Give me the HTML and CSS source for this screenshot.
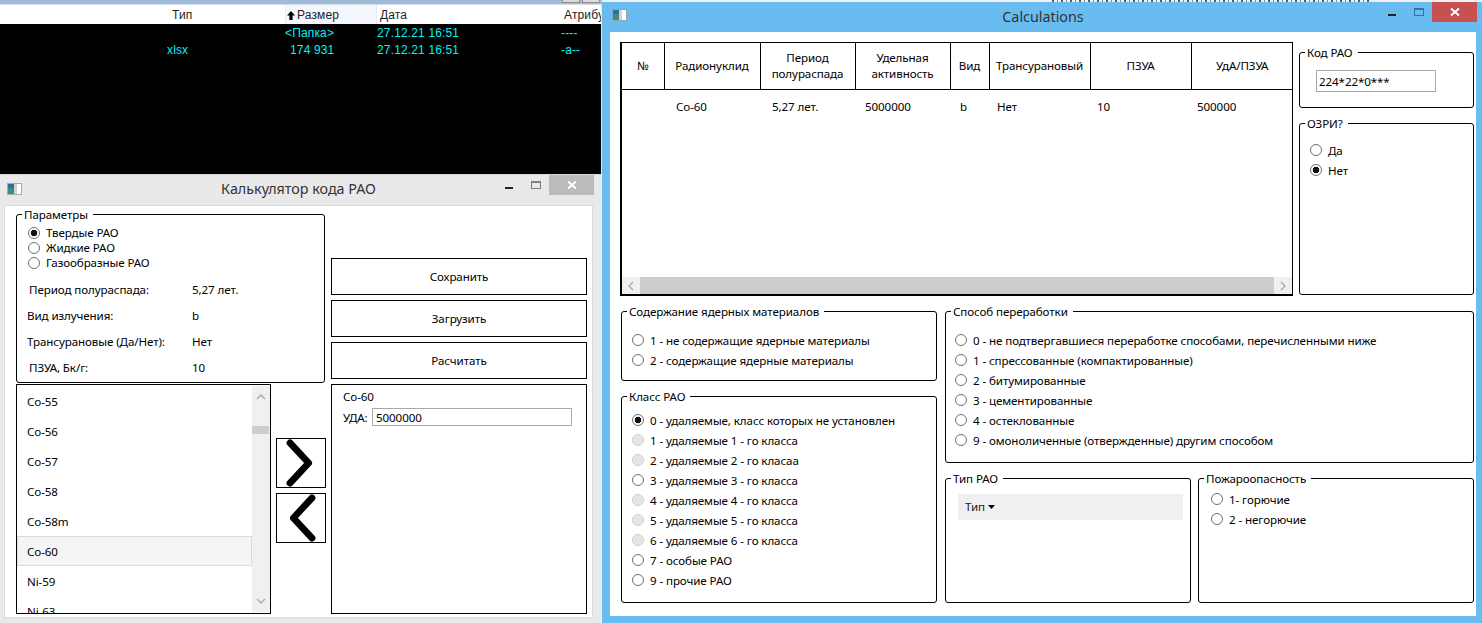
FILE: index.html
```html
<!DOCTYPE html>
<html lang="ru">
<head>
<meta charset="utf-8">
<title>Calculations</title>
<link rel="stylesheet" href="styles.css">
</head>
<body>
<div class="desktop">
  <div class="scrap"></div>

  <section class="window commander">
    <div class="cmd-top"><span class="cmd-btn"></span><span class="cmd-btn"></span></div>
    <div class="cmd-row cmd-head">
      <span></span>
      <span class="h-type">Тип</span>
      <span class="h-size"><svg class="sort" viewBox="0 0 8 9" width="8" height="9"><path d="M4 0 8 4.5H5.6V9H2.4V4.5H0Z"/></svg>Размер</span>
      <span class="h-date">Дата</span>
      <span class="h-attr">Атрибу</span>
    </div>
    <div class="cmd-panel">
      <div class="cmd-row"><span></span><span></span><span>&lt;Папка&gt;</span><span>27.12.21 16:51</span><span>----</span></div>
      <div class="cmd-row"><span></span><span>xlsx</span><span class="num">174 931</span><span>27.12.21 16:51</span><span>-a--</span></div>
    </div>
  </section>

  <section class="window calc-code">
    <header class="titlebar">
      <svg class="appicon" viewBox="0 0 15 12" width="15" height="12"><rect width="15" height="12" fill="#a9a9a9"/><rect x="1" y="1" width="13" height="10" fill="#fff"/><rect x="1" y="1" width="6" height="10" fill="#3f8a86"/><rect x="1" y="1" width="6" height="4" fill="#2b6f9e"/><rect x="7" y="1" width="3" height="10" fill="#c8d8d0"/></svg>
      <h1 class="title">Калькулятор кода РАО</h1>
      <span class="min"></span><span class="max"></span>
      <span class="close"><svg viewBox="0 0 10 10" width="10" height="10"><path d="M1 1.5 9 8.5M9 1.5 1 8.5" stroke="#fff" stroke-width="2" fill="none"/></svg></span>
    </header>
    <div class="code-body">
      <div class="code-top">
        <div class="group params">
          <div class="legend">Параметры</div>
          <div class="radios tight">
            <label class="opt"><input class="radio" type="radio" name="state" checked>Твердые РАО</label>
            <label class="opt"><input class="radio" type="radio" name="state">Жидкие РАО</label>
            <label class="opt"><input class="radio" type="radio" name="state">Газообразные РАО</label>
          </div>
          <dl class="facts">
            <dt class="nudge">Период полураспада:</dt><dd>5,27 лет.</dd>
            <dt>Вид излучения:</dt><dd>b</dd>
            <dt>Трансурановые (Да/Нет):</dt><dd>Нет</dd>
            <dt class="nudge">ПЗУА, Бк/г:</dt><dd>10</dd>
          </dl>
        </div>
        <div class="actions">
          <button class="btn">Сохранить</button>
          <button class="btn">Загрузить</button>
          <button class="btn">Расчитать</button>
        </div>
      </div>
      <div class="code-bottom">
        <div class="listbox">
          <ul class="items">
            <li>Co-55</li><li>Co-56</li><li>Co-57</li><li>Co-58</li><li>Co-58m</li>
            <li class="selected">Co-60</li><li>Ni-59</li><li>Ni-63</li>
          </ul>
          <div class="vscroll">
            <svg class="vs-arrow" viewBox="0 0 10 6" width="10" height="6"><path d="M1 5 5 1 9 5" fill="none" stroke="#a6a6a6" stroke-width="1.3"/></svg>
            <span class="vs-thumb"></span>
            <svg class="vs-arrow" viewBox="0 0 10 6" width="10" height="6"><path d="M1 1 5 5 9 1" fill="none" stroke="#a6a6a6" stroke-width="1.3"/></svg>
          </div>
        </div>
        <div class="arrows">
          <button class="arrow"><svg viewBox="0 0 50 50" width="48" height="48"><path d="M13.5 4 33 25 13.5 46" fill="none" stroke="#000" stroke-width="7" stroke-linejoin="round" stroke-linecap="round"/></svg></button>
          <button class="arrow"><svg viewBox="0 0 50 50" width="48" height="48"><path d="M36.5 4 17 25 36.5 46" fill="none" stroke="#000" stroke-width="7" stroke-linejoin="round" stroke-linecap="round"/></svg></button>
        </div>
        <div class="detail">
          <div class="detail-name">Co-60</div>
          <label class="detail-field"><span class="uda-label">УДА:</span><input class="field uda" type="text" value="5000000"></label>
        </div>
      </div>
    </div>
  </section>

  <section class="window calculations">
    <header class="titlebar">
      <svg class="appicon" viewBox="0 0 15 12" width="15" height="12"><rect width="15" height="12" fill="#8ea9bd"/><rect x="1" y="1" width="13" height="10" fill="#fff"/><rect x="1" y="1" width="6" height="10" fill="#3f8a86"/><rect x="1" y="1" width="6" height="4" fill="#2b6f9e"/><rect x="7" y="1" width="3" height="10" fill="#c8d8d0"/></svg>
      <h1 class="title">Calculations</h1>
      <span class="min"></span><span class="max"></span>
      <span class="close"><svg viewBox="0 0 10 10" width="10" height="10"><path d="M1 1.5 9 8.5M9 1.5 1 8.5" stroke="#fff" stroke-width="2" fill="none"/></svg></span>
    </header>
    <div class="calc-body">
      <div class="calc-top">
        <div class="grid-wrap">
          <table class="grid">
            <colgroup><col class="c1"><col class="c2"><col class="c3"><col class="c4"><col class="c5"><col class="c6"><col class="c7"><col class="c8"></colgroup>
            <thead>
              <tr><th>№</th><th>Радионуклид</th><th>Период<br>полураспада</th><th>Удельная<br>активность</th><th>Вид</th><th>Трансурановый</th><th>ПЗУА</th><th>УдА/ПЗУА</th></tr>
            </thead>
            <tbody>
              <tr><td></td><td>Co-60</td><td>5,27 лет.</td><td>5000000</td><td>b</td><td>Нет</td><td>10</td><td>500000</td></tr>
            </tbody>
          </table>
          <div class="hscroll">
            <svg class="hs-arrow" viewBox="0 0 6 10" width="6" height="10"><path d="M5 1 1 5 5 9" fill="none" stroke="#a6a6a6" stroke-width="1.3"/></svg>
            <span class="hs-thumb"></span>
            <svg class="hs-arrow" viewBox="0 0 6 10" width="6" height="10"><path d="M1 1 5 5 1 9" fill="none" stroke="#a6a6a6" stroke-width="1.3"/></svg>
          </div>
        </div>
        <div class="side">
          <div class="group code-group">
            <div class="legend">Код РАО</div>
            <input class="field code" type="text" value="224*22*0***">
          </div>
          <div class="group ozri">
            <div class="legend">ОЗРИ?</div>
            <div class="radios pad-ozri">
              <label class="opt"><input class="radio" type="radio" name="ozri">Да</label>
              <label class="opt"><input class="radio" type="radio" name="ozri" checked>Нет</label>
            </div>
          </div>
        </div>
      </div>
      <div class="calc-bottom">
        <div class="col-left">
          <div class="group nuclear">
            <div class="legend">Содержание ядерных материалов</div>
            <div class="radios pad-9">
              <label class="opt"><input class="radio" type="radio" name="nuc">1 - не содержащие ядерные материалы</label>
              <label class="opt"><input class="radio" type="radio" name="nuc">2 - содержащие ядерные материалы</label>
            </div>
          </div>
          <div class="group klass">
            <div class="legend">Класс РАО</div>
            <div class="radios pad-4">
              <label class="opt"><input class="radio" type="radio" name="cls" checked>0 - удаляемые, класс которых не установлен</label>
              <label class="opt"><input class="radio" type="radio" name="cls" disabled>1 - удаляемые 1 - го класса</label>
              <label class="opt"><input class="radio" type="radio" name="cls" disabled>2 - удаляемые 2 - го класаа</label>
              <label class="opt"><input class="radio" type="radio" name="cls">3 - удаляемые 3 - го класса</label>
              <label class="opt"><input class="radio" type="radio" name="cls" disabled>4 - удаляемые 4 - го класса</label>
              <label class="opt"><input class="radio" type="radio" name="cls" disabled>5 - удаляемые 5 - го класса</label>
              <label class="opt"><input class="radio" type="radio" name="cls" disabled>6 - удаляемые 6 - го класса</label>
              <label class="opt"><input class="radio" type="radio" name="cls">7 - особые РАО</label>
              <label class="opt"><input class="radio" type="radio" name="cls">9 - прочие РАО</label>
            </div>
          </div>
        </div>
        <div class="col-right">
          <div class="group process">
            <div class="legend">Способ переработки</div>
            <div class="radios pad-9">
              <label class="opt"><input class="radio" type="radio" name="proc">0 - не подтвергавшиеся переработке способами, перечисленными ниже</label>
              <label class="opt"><input class="radio" type="radio" name="proc">1 - спрессованные (компактированные)</label>
              <label class="opt"><input class="radio" type="radio" name="proc">2 - битумированные</label>
              <label class="opt"><input class="radio" type="radio" name="proc">3 - цементированные</label>
              <label class="opt"><input class="radio" type="radio" name="proc">4 - остеклованные</label>
              <label class="opt"><input class="radio" type="radio" name="proc">9 - омоноличенные (отвержденные) другим способом</label>
            </div>
          </div>
          <div class="row-low">
            <div class="group type">
              <div class="legend">Тип РАО</div>
              <div class="dropdown">Тип<svg class="caret" viewBox="0 0 7 4" width="7" height="4"><path d="M0 0H7L3.5 4Z"/></svg></div>
            </div>
            <div class="group fire">
              <div class="legend">Пожароопасность</div>
              <div class="radios pad-1">
                <label class="opt"><input class="radio" type="radio" name="fire">1- горючие</label>
                <label class="opt"><input class="radio" type="radio" name="fire">2 - негорючие</label>
              </div>
            </div>
          </div>
        </div>
      </div>
    </div>
  </section>
</div>
</body>
</html>
```

FILE: styles.css
```css
* { box-sizing: border-box; }
html, body { margin: 0; padding: 0; }
body {
  width: 1482px;
  height: 623px;
  overflow: hidden;
  background: #f1f1f1;
  font-family: "Noto Sans", "Open Sans", sans-serif;
  font-size: 11.6px;
  letter-spacing: -0.1px;
  color: #000;
}
.desktop { position: relative; width: 1482px; height: 623px; overflow: hidden; }
.scrap {
  position: absolute; left: 1052px; top: 0; width: 320px; height: 2px;
  background: repeating-linear-gradient(90deg, #5b5b5b 0 2px, #eee 2px 5px, #8a8a8a 5px 6px, #f1f1f1 6px 9px);
}
.window { position: absolute; display: flex; flex-direction: column; }

/* file manager behind */
.commander { left: 0; top: 0; width: 602px; height: 174px; background: #e6e6e6; font-family: "Liberation Sans", Arial, sans-serif; font-size: 12px; letter-spacing: .15px; }
.cmd-top { height: 5px; flex: none; background: #9fbbd9; border-bottom: 1px solid #d6dde5; display: flex; justify-content: flex-end; gap: 2px; padding-right: 2px; }
.cmd-btn { width: 18px; height: 3px; background: #dcdcdc; border: 1px solid #8e8e8e; border-top: 0; }
.cmd-row { display: grid; grid-template-columns: 167px 118px 92px 184px 1fr; height: 17px; line-height: 17px; }
.cmd-head { flex: none; height: 19px; line-height: 20px; background: #fff; color: #222; width: 601px; overflow: hidden; }
.h-type { padding-left: 5px; }
.h-size { background: #f4f7fc; border: 1px solid #e4ebf5; border-width: 0 1px; line-height: 19px; display: flex; align-items: center; gap: 2px; padding-left: 1px; }
.sort { fill: #000; flex: none; }
.h-date, .h-attr { padding-left: 3px; white-space: nowrap; }
.cmd-panel { flex: 1; background: #000; color: #00f2f2; width: 601px; padding-top: 1px; }
.cmd-panel .num { padding-left: 5px; }

/* title bars */
.titlebar { position: relative; flex: none; display: flex; align-items: center; }
.title { margin: 0; font-weight: 400; font-size: 14.3px; letter-spacing: 0; color: #333; text-align: center; flex: 1; }
.appicon { position: absolute; }
.min { position: absolute; width: 8px; height: 2px; background: #222; }
.max { position: absolute; width: 10px; height: 8px; border: 1px solid #7f7f7f; border-top-width: 2px; }
.close { position: absolute; width: 45px; height: 20px; display: flex; align-items: center; justify-content: center; }

/* left window */
.calc-code { left: 0; top: 174px; width: 601px; height: 449px; background: #e9e9e9; border-top: 1px solid #d8d8d8; }
.calc-code .titlebar { height: 30px; }
.calc-code .title { margin-right: 4px; padding-bottom: 3px; }
.calc-code .appicon { left: 7px; top: 8px; }
.calc-code .min { left: 505px; top: 12px; }
.calc-code .max { left: 531px; top: 6px; }
.calc-code .close { left: 549px; top: 0; background: #bcbcbc; }
.code-body {
  flex: none; height: 413px; margin: 0 8px 0 4px; background: #fff;
  border: 1px solid #dcdcdc; padding: 8px 0 0 11px;
  display: flex; flex-direction: column; gap: 1px;
}
.code-top { display: flex; gap: 6px; height: 169px; flex: none; }
.params { width: 309px; height: 169px; }
.actions { display: flex; flex-direction: column; gap: 5px; padding-top: 44px; width: 256px; }
.btn { height: 37px; border: 1px solid #000; background: #fff; font: inherit; letter-spacing: inherit; padding: 0; color: #000; border-radius: 0; }
.code-bottom { display: flex; height: 230px; flex: none; }
.listbox { width: 255px; border: 1px solid #000; display: flex; overflow: hidden; }
.items { list-style: none; margin: 0; padding: 1px 0 0; width: 235px; flex: none; }
.items li { height: 30px; line-height: 29px; padding-left: 10px; border: 1px solid transparent; border-left-width: 0; }
.items .selected { background: #f5f5f5; border: 1px solid #dadada; padding-left: 9px; }
.vscroll { flex: 1; background: #f0f0f0; display: flex; flex-direction: column; align-items: center; position: relative; padding: 8px 0; justify-content: space-between; margin: 1px 0; }
.vs-thumb { position: absolute; left: 0; right: 1px; top: 40px; height: 8px; background: #cdcdcd; }
.arrows { width: 60px; flex: none; display: flex; flex-direction: column; align-items: center; gap: 5px; padding-top: 54px; }
.arrow { width: 50px; height: 50px; padding: 0; border: 1px solid #000; background: #fff; display: flex; }
.detail { width: 256px; border: 1px solid #000; padding: 3px 0 0 11px; }
.detail-name { height: 17px; line-height: 17px; }
.detail-field { display: flex; align-items: center; margin-top: 3px; }
.uda-label { width: 29px; flex: none; }
.field { border: 1px solid #a9a9a9; font: inherit; letter-spacing: inherit; color: #000; background: #fff; border-radius: 0; outline: none; }
.uda { width: 200px; height: 18px; padding: 0 3px; }

/* group boxes */
.group { border: 1px solid #000; border-radius: 3px; background: #fff; }
.legend { display: block; width: fit-content; height: 18px; line-height: 18px; margin: -9px 0 0 5px; padding: 0 5px 0 2px; background: #fff; }
.radios { display: flex; flex-direction: column; padding-left: 10px; }
.opt { display: flex; align-items: center; gap: 6px; height: 20px; white-space: nowrap; }
.tight { padding-top: 1px; padding-left: 11px; }
.tight .opt { height: 15px; }
.radio {
  appearance: none; -webkit-appearance: none; margin: 0; flex: none; width: 12px; height: 12px;
  border: 1px solid #6f6f6f; border-radius: 50%; background: #fff;
}
.radio:checked { background: radial-gradient(circle, #111 0 3px, #fff 3.6px); }
.radio:disabled { background: #e6e6e6; border-color: #cfcfcf; }
.facts { display: grid; grid-template-columns: 165px 1fr; grid-auto-rows: 26px; align-items: center; margin: 6px 0 0; padding-left: 10px; }
.facts dt { white-space: nowrap; }
.facts dd { margin: 0; padding-top: 1px; }
.nudge { padding-left: 2px; }

/* calculations window */
.calculations { left: 602px; top: 2px; width: 880px; height: 621px; background: #69bcf0; }
.calculations .titlebar { height: 30px; }
.calculations .title { padding-bottom: 2px; padding-left: 2px; }
.calculations .appicon { left: 10px; top: 7px; }
.calculations .min { left: 786px; top: 12px; }
.calculations .max { left: 812px; top: 6px; border-color: #3c6f95; }
.calculations .close { left: 830px; top: 0; background: #c75050; }
.calc-body {
  flex: none; width: 866px; height: 584px; margin-left: 8px; background: #fff;
  padding: 10px 2px 0 10px; display: flex; flex-direction: column;
}
.calc-top { display: flex; gap: 6px; height: 254px; flex: none; }
.grid-wrap { width: 673px; height: 254px; border: 1px solid #000; border-left-width: 2px; border-bottom-width: 2px; display: flex; flex-direction: column; justify-content: space-between; }
.grid { border-collapse: collapse; table-layout: fixed; width: 671px; }
.c1 { width: 42px; } .c2 { width: 96px; } .c3 { width: 95px; } .c4 { width: 95px; }
.c5 { width: 39px; } .c6 { width: 101px; } .c7 { width: 101px; } .c8 { width: 102px; }
.grid th { height: 46px; font-weight: 400; line-height: 16px; padding: 0; text-align: center; border-right: 1px solid #000; border-bottom: 1px solid #000; white-space: nowrap; }
.grid th:last-child { border-right: 0; }
.grid td { height: 34px; padding: 0 0 0 12px; white-space: nowrap; }
.grid td:nth-child(4), .grid td:nth-child(5) { padding-left: 10px; }
.grid td:nth-child(6) { padding-left: 8px; }
.grid td:nth-child(7) { padding-left: 7px; }
.grid td:nth-child(8) { padding-left: 6px; }
.hscroll { height: 17px; display: flex; align-items: center; background: #f0f0f0; flex: none; }
.hs-arrow { flex: none; margin: 0 6px; }
.hs-thumb { flex: 1; height: 17px; background: #cdcdcd; }
.side { width: 175px; padding-top: 10px; display: flex; flex-direction: column; gap: 15px; }
.code-group { height: 56px; }
.code { display: block; width: 120px; height: 22px; margin: 8px 0 0 16px; padding: 0 2px; }
.ozri { height: 172px; }
.pad-ozri { padding-top: 7px; }
.pad-9 { padding-top: 9px; }
.pad-4 { padding-top: 4px; }
.pad-1 { padding-top: 1px; padding-left: 12px; }
.calc-bottom { display: flex; gap: 8px; margin-top: 15px; }
.col-left { width: 317px; margin-left: 1px; display: flex; flex-direction: column; gap: 15px; }
.col-right { width: 529px; display: flex; flex-direction: column; gap: 15px; }
.nuclear { height: 70px; }
.klass { height: 207px; }
.process { height: 152px; }
.process .radios { padding-left: 9px; }
.row-low { display: flex; gap: 7px; }
.type { width: 246px; height: 125px; }
.fire { width: 276px; height: 125px; }
.dropdown { margin: 6px 0 0 12px; width: 225px; height: 26px; line-height: 25px; background: #f0f0f0; padding-left: 7px; color: #222; }
.caret { margin-left: 3px; vertical-align: 2px; fill: #000; }
```
